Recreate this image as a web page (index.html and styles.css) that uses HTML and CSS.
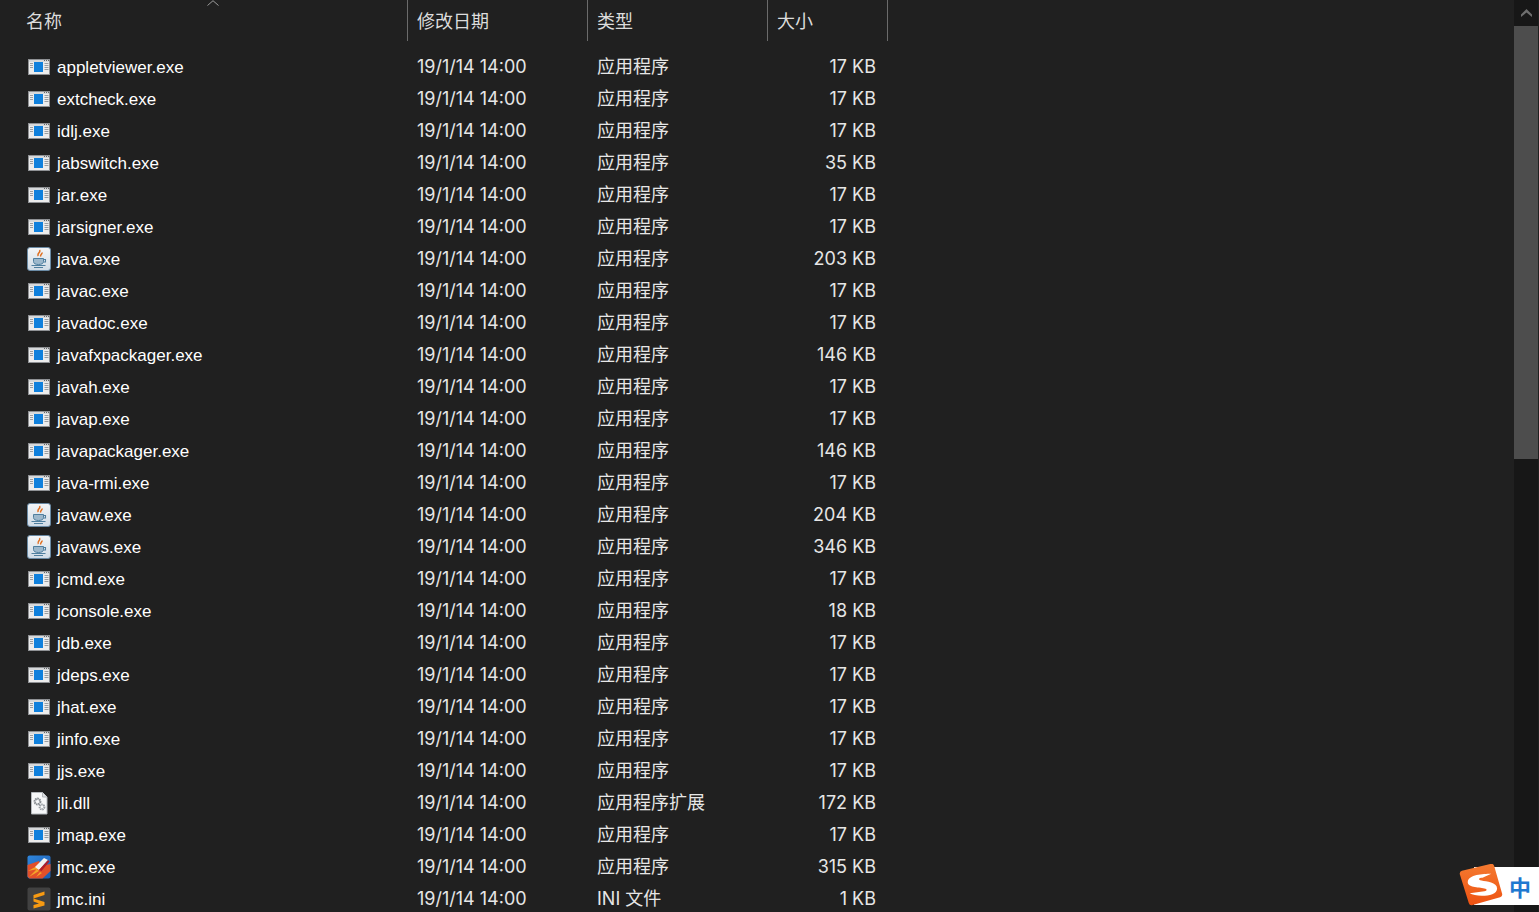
FILE: index.html
```html
<!DOCTYPE html>
<html lang="zh">
<head>
<meta charset="utf-8">
<title>Explorer</title>
<link rel="stylesheet" href="styles.css">
</head>
<body>
<svg class="defs" width="0" height="0">
<defs>
<linearGradient id="g-java" x1="0" y1="0" x2="0" y2="1"><stop offset="0" stop-color="#f4f6f8"/><stop offset="1" stop-color="#cfdbe6"/></linearGradient>
<linearGradient id="g-sogou" x1="0" y1="0" x2="0" y2="1"><stop offset="0" stop-color="#f47a30"/><stop offset="1" stop-color="#ee5212"/></linearGradient>
<linearGradient id="g-jmc" x1="0" y1="0" x2="1" y2="1"><stop offset="0" stop-color="#2f86dc"/><stop offset="1" stop-color="#1c5cb0"/></linearGradient>
</defs>
<symbol id="i-exe" viewBox="0 0 24 24">
<rect x="1.500" y="4.500" width="21" height="15" fill="#ececec" stroke="#8f9194"/>
<rect x="2" y="5" width="20" height="2" fill="#d6d8da"/>
<rect x="17" y="5" width="1" height="1" fill="#666"/><rect x="19" y="5" width="1" height="1" fill="#666"/><rect x="21" y="5" width="1" height="1" fill="#666"/>
<rect x="7" y="7" width="9" height="10" fill="#1080dc"/>
<path d="M3 8.500h3M3 10.500h3M3 12.500h3M17.500 8.500h4M17.500 10.500h4M17.500 12.500h4M17.500 14.500h4" stroke="#9a9ea2"/>
</symbol>
<symbol id="i-java" viewBox="0 0 24 24">
<rect x="0.500" y="0.500" width="23" height="23" rx="2.500" fill="url(#g-java)" stroke="#6a8aa4"/>
<path d="M12.500 3c1.800 2.200-3 3.400-1.200 6M15 5.500c.6 1.500-2.200 2-1.200 4" stroke="#e07022" stroke-width="1.500" fill="none"/>
<path d="M6.500 11.500h10v3c0 2-2 3-5 3s-5-1-5-3z" fill="#9db8cc" stroke="#4f7f9f"/>
<path d="M16.500 12.500h2v2.500h-2M4.500 18.500h14M7 20.500h9" stroke="#4f7f9f" stroke-width="1.100" fill="none"/>
</symbol>
<symbol id="i-dll" viewBox="0 0 24 24">
<path d="M4.500 1.500h11l4.500 4.500v17h-15.500z" fill="#f6f7f8" stroke="#b4b8bc"/>
<path d="M15.500 1.500v4.500h4.500" fill="#dcdfe2" stroke="#b4b8bc"/>
<circle cx="10.500" cy="10.500" r="2.800" fill="none" stroke="#868b90" stroke-width="2.200" stroke-dasharray="1.500 .6"/>
<circle cx="15" cy="16" r="2.400" fill="none" stroke="#989da2" stroke-width="2" stroke-dasharray="1.300 .6"/>
</symbol>
<symbol id="i-jmc" viewBox="0 0 24 24">
<rect x="0.500" y="0.500" width="23" height="23" rx="2" fill="url(#g-jmc)"/>
<path d="M0.500 21.500V10L12 6l2 5 9.500-2v7l-8 7.500H2.500z" fill="#e2502a"/>
<path d="M1 16l9-5 1 3zM2 22l8-8 2 2zM9 22l4-5 2 1z" fill="#f4a62a"/>
<path d="M8 12l9-9 4 2-9 10z" fill="#f4f1ee"/>
<path d="M12 15l9-10 1.500 1.500-8 9.500z" fill="#b01e2a"/>
</symbol>
<symbol id="i-ini" viewBox="0 0 24 24">
<rect x="0.500" y="0.500" width="23" height="23" rx="2" fill="#414141"/>
<path d="M17.500 4.500v3.500L6.500 11.500V8zM6.500 11.500l11 3.500v3.500l-11 3v-3.500l5.500-1.500-5.500-2z" fill="#f79a12"/>
</symbol>
<symbol id="i-sogou" viewBox="0 0 44 44">
<path d="M1 11q-1-3 2-4L32 0q3-1 4 2l8 28q1 3-2 4l-28 8q-3 1-4-2z" fill="url(#g-sogou)"/>
<path d="M33 10c-9 0-23 1-24 8-1 6 11 6 17 7 3 .5 3 2 0 3l-15 2c6 4 28 4 28-5 0-6-11-7-16-8-4-1-3-3 1-3z" fill="#fff"/>
</symbol>
</svg>
<div class="window">
<main class="list">
<header class="head">
<div class="col c-name head-cell">名称<svg class="sort" width="12" height="6" viewBox="0 0 12 6"><path d="M.5 5.500 6 .7l5.500 4.800" fill="none" stroke="#9b9b9b"/></svg></div>
<div class="col c-date head-cell sep">修改日期</div>
<div class="col c-type head-cell sep">类型</div>
<div class="col c-size head-cell sep">大小</div>
</header>
<div class="rows">
<div class="row"><div class="col c-name"><svg class="ico"><use href="#i-exe"/></svg>appletviewer.exe</div><div class="col c-date">19/1/14 14:00</div><div class="col c-type">应用程序</div><div class="col c-size">17 KB</div></div>
<div class="row"><div class="col c-name"><svg class="ico"><use href="#i-exe"/></svg>extcheck.exe</div><div class="col c-date">19/1/14 14:00</div><div class="col c-type">应用程序</div><div class="col c-size">17 KB</div></div>
<div class="row"><div class="col c-name"><svg class="ico"><use href="#i-exe"/></svg>idlj.exe</div><div class="col c-date">19/1/14 14:00</div><div class="col c-type">应用程序</div><div class="col c-size">17 KB</div></div>
<div class="row"><div class="col c-name"><svg class="ico"><use href="#i-exe"/></svg>jabswitch.exe</div><div class="col c-date">19/1/14 14:00</div><div class="col c-type">应用程序</div><div class="col c-size">35 KB</div></div>
<div class="row"><div class="col c-name"><svg class="ico"><use href="#i-exe"/></svg>jar.exe</div><div class="col c-date">19/1/14 14:00</div><div class="col c-type">应用程序</div><div class="col c-size">17 KB</div></div>
<div class="row"><div class="col c-name"><svg class="ico"><use href="#i-exe"/></svg>jarsigner.exe</div><div class="col c-date">19/1/14 14:00</div><div class="col c-type">应用程序</div><div class="col c-size">17 KB</div></div>
<div class="row"><div class="col c-name"><svg class="ico"><use href="#i-java"/></svg>java.exe</div><div class="col c-date">19/1/14 14:00</div><div class="col c-type">应用程序</div><div class="col c-size">203 KB</div></div>
<div class="row"><div class="col c-name"><svg class="ico"><use href="#i-exe"/></svg>javac.exe</div><div class="col c-date">19/1/14 14:00</div><div class="col c-type">应用程序</div><div class="col c-size">17 KB</div></div>
<div class="row"><div class="col c-name"><svg class="ico"><use href="#i-exe"/></svg>javadoc.exe</div><div class="col c-date">19/1/14 14:00</div><div class="col c-type">应用程序</div><div class="col c-size">17 KB</div></div>
<div class="row"><div class="col c-name"><svg class="ico"><use href="#i-exe"/></svg>javafxpackager.exe</div><div class="col c-date">19/1/14 14:00</div><div class="col c-type">应用程序</div><div class="col c-size">146 KB</div></div>
<div class="row"><div class="col c-name"><svg class="ico"><use href="#i-exe"/></svg>javah.exe</div><div class="col c-date">19/1/14 14:00</div><div class="col c-type">应用程序</div><div class="col c-size">17 KB</div></div>
<div class="row"><div class="col c-name"><svg class="ico"><use href="#i-exe"/></svg>javap.exe</div><div class="col c-date">19/1/14 14:00</div><div class="col c-type">应用程序</div><div class="col c-size">17 KB</div></div>
<div class="row"><div class="col c-name"><svg class="ico"><use href="#i-exe"/></svg>javapackager.exe</div><div class="col c-date">19/1/14 14:00</div><div class="col c-type">应用程序</div><div class="col c-size">146 KB</div></div>
<div class="row"><div class="col c-name"><svg class="ico"><use href="#i-exe"/></svg>java-rmi.exe</div><div class="col c-date">19/1/14 14:00</div><div class="col c-type">应用程序</div><div class="col c-size">17 KB</div></div>
<div class="row"><div class="col c-name"><svg class="ico"><use href="#i-java"/></svg>javaw.exe</div><div class="col c-date">19/1/14 14:00</div><div class="col c-type">应用程序</div><div class="col c-size">204 KB</div></div>
<div class="row"><div class="col c-name"><svg class="ico"><use href="#i-java"/></svg>javaws.exe</div><div class="col c-date">19/1/14 14:00</div><div class="col c-type">应用程序</div><div class="col c-size">346 KB</div></div>
<div class="row"><div class="col c-name"><svg class="ico"><use href="#i-exe"/></svg>jcmd.exe</div><div class="col c-date">19/1/14 14:00</div><div class="col c-type">应用程序</div><div class="col c-size">17 KB</div></div>
<div class="row"><div class="col c-name"><svg class="ico"><use href="#i-exe"/></svg>jconsole.exe</div><div class="col c-date">19/1/14 14:00</div><div class="col c-type">应用程序</div><div class="col c-size">18 KB</div></div>
<div class="row"><div class="col c-name"><svg class="ico"><use href="#i-exe"/></svg>jdb.exe</div><div class="col c-date">19/1/14 14:00</div><div class="col c-type">应用程序</div><div class="col c-size">17 KB</div></div>
<div class="row"><div class="col c-name"><svg class="ico"><use href="#i-exe"/></svg>jdeps.exe</div><div class="col c-date">19/1/14 14:00</div><div class="col c-type">应用程序</div><div class="col c-size">17 KB</div></div>
<div class="row"><div class="col c-name"><svg class="ico"><use href="#i-exe"/></svg>jhat.exe</div><div class="col c-date">19/1/14 14:00</div><div class="col c-type">应用程序</div><div class="col c-size">17 KB</div></div>
<div class="row"><div class="col c-name"><svg class="ico"><use href="#i-exe"/></svg>jinfo.exe</div><div class="col c-date">19/1/14 14:00</div><div class="col c-type">应用程序</div><div class="col c-size">17 KB</div></div>
<div class="row"><div class="col c-name"><svg class="ico"><use href="#i-exe"/></svg>jjs.exe</div><div class="col c-date">19/1/14 14:00</div><div class="col c-type">应用程序</div><div class="col c-size">17 KB</div></div>
<div class="row"><div class="col c-name"><svg class="ico"><use href="#i-dll"/></svg>jli.dll</div><div class="col c-date">19/1/14 14:00</div><div class="col c-type">应用程序扩展</div><div class="col c-size">172 KB</div></div>
<div class="row"><div class="col c-name"><svg class="ico"><use href="#i-exe"/></svg>jmap.exe</div><div class="col c-date">19/1/14 14:00</div><div class="col c-type">应用程序</div><div class="col c-size">17 KB</div></div>
<div class="row"><div class="col c-name"><svg class="ico"><use href="#i-jmc"/></svg>jmc.exe</div><div class="col c-date">19/1/14 14:00</div><div class="col c-type">应用程序</div><div class="col c-size">315 KB</div></div>
<div class="row"><div class="col c-name"><svg class="ico"><use href="#i-ini"/></svg>jmc.ini</div><div class="col c-date">19/1/14 14:00</div><div class="col c-type">INI 文件</div><div class="col c-size">1 KB</div></div>
</div>
</main>
<aside class="scrollbar">
<div class="arrow"><svg width="11" height="8" viewBox="0 0 11 8"><path d="M0 8V5.500L5.500 0 11 5.500V8L5.500 3.500z" fill="#6e6e6e"/></svg></div>
<div class="thumb"></div>
</aside>
</div>
<div class="ime"><svg class="ime-logo"><use href="#i-sogou"/></svg><span class="ime-box">中</span></div>
</body>
</html>
```
FILE: styles.css
```css
* { box-sizing: border-box; }
html, body { margin: 0; height: 100%; overflow: hidden; }
body {
  background: #202020;
  color: #fff;
  font-family: Inter, "Noto Sans CJK SC", sans-serif;
  font-size: 18px;
}
.defs { display: block; height: 0; }
.window { display: flex; height: 912px; }
.list { flex: 1; min-width: 0; }
.head { display: flex; height: 41px; margin-bottom: 10px; }
.head-cell { position: relative; color: #dcdcdc; align-items: center; height: 41px; padding-bottom: 2px; }
.sep { border-left: 1px solid #6b6b6b; }
.head .c-name { padding-left: 26px; }
.sort { position: absolute; left: 207px; top: 0; }
.row { display: flex; height: 32px; }
.col { display: flex; align-items: center; white-space: nowrap; }
.c-name { width: 407px; padding-left: 27px; font-family: "Liberation Sans", sans-serif; font-size: 17px; }
.head .c-name { font-family: Inter, "Noto Sans CJK SC", sans-serif; font-size: 18px; }
.row .c-name { padding-top: 1px; }
.ico { width: 24px; height: 24px; margin: -1px 6px 0 0; flex: none; }
.c-date { width: 180px; padding: 0 0 1px 10px; color: #e6e6e6; }
.c-type { width: 180px; padding: 0 0 4px 10px; color: #e6e6e6; }
.c-size { width: 120px; padding: 0 11px 1px 0; justify-content: flex-end; color: #e6e6e6; }
.head .c-size { width: 121px; justify-content: flex-start; padding: 0 0 2px 9px; color: #dcdcdc; border-right: 1px solid #6b6b6b; }
.head .c-date, .head .c-type { padding: 0 0 2px 9px; color: #dcdcdc; }
.scrollbar { width: 25px; background: #171717; border-right: 1px solid #202020; display: flex; flex-direction: column; }
.arrow { height: 26px; display: flex; align-items: center; justify-content: center; }
.thumb { height: 433px; background: #4d4d4d; }
.ime { position: absolute; left: 1458px; top: 864px; width: 81px; height: 48px; }
.ime-logo { position: absolute; left: 0; top: 0; width: 45px; height: 43px; z-index: 1; }
.ime-box { position: absolute; left: 16px; top: 3px; width: 65px; height: 38px; background: #fff; color: #1f79d0; font-size: 22px; font-weight: 700; display: flex; align-items: center; justify-content: flex-end; padding-right: 8px; }
```
